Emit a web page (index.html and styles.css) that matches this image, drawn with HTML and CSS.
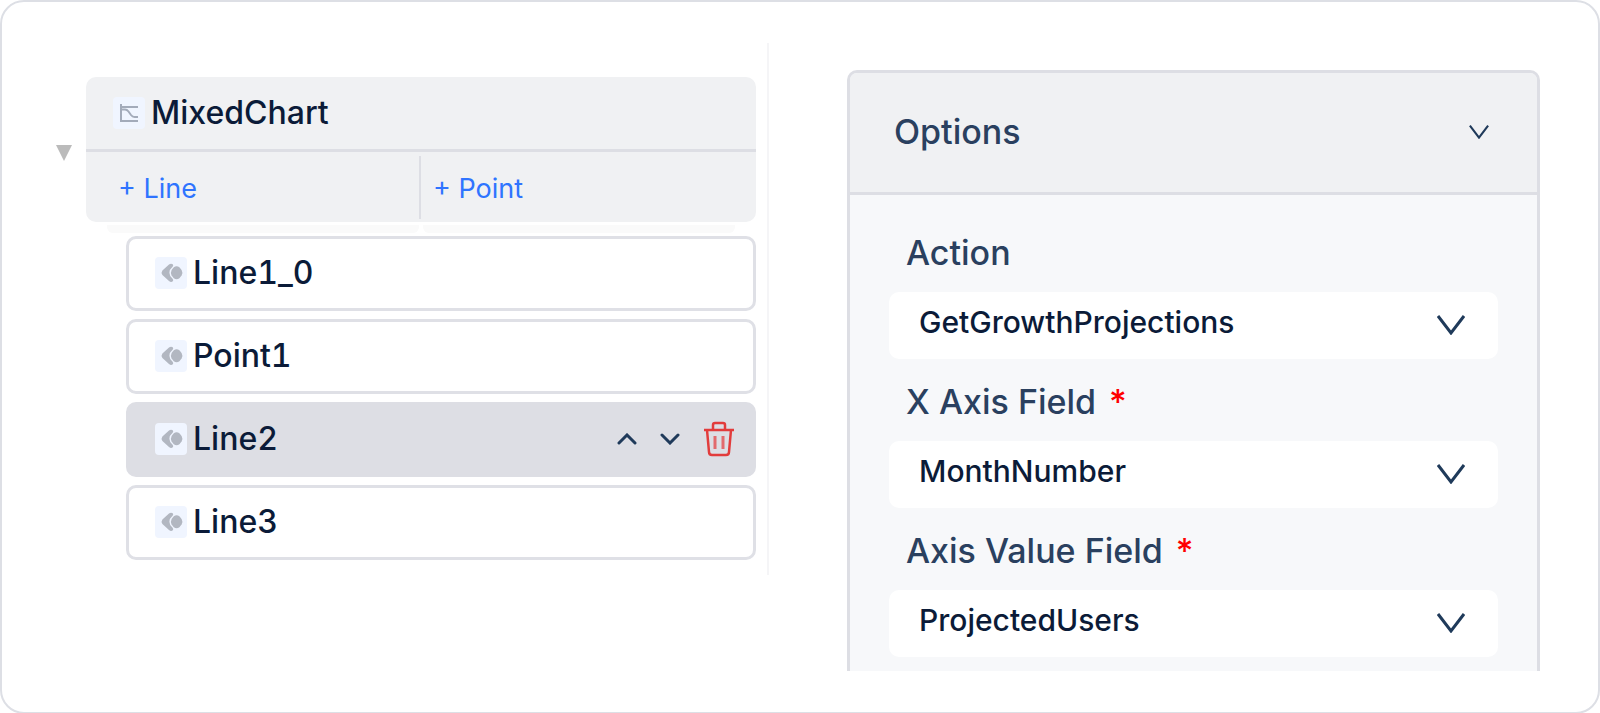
FILE: index.html
```
<!DOCTYPE html>
<html lang="en">
<head>
  <meta charset="UTF-8">
  <meta name="viewport" content="width=device-width, initial-scale=1.0">
  <title>Mixed Chart Options</title>
  <link rel="stylesheet" href="styles.css">
</head>
<body>
  <svg class="sprite" aria-hidden="true">
    <symbol id="icon-node" viewBox="0 0 32 32">
      <path d="M14 7.500 Q16.200 5.800 18 7.600 Q18.600 8.800 17.600 9.800 Q14.400 12.400 14.400 15.800 Q14.400 19.200 17.600 21.800 Q18.600 23 18 24 Q16.200 25.800 14 24 L7.400 18 Q5.800 15.800 7.400 13.600 Z"/>
      <path d="M18.800 10.300 Q21.600 8.300 24.400 10.300 L26.600 13 Q28.200 15.800 26.600 18.600 L24.400 21.200 Q21.600 23.200 18.800 21.200 L16.600 18.600 Q15.200 15.800 16.600 13 Z"/>
    </symbol>
    <symbol id="icon-arrow" viewBox="0 0 28 20">
      <path d="M1 1 L14 18 L27 1"/>
    </symbol>
  </svg>
  <main class="frame">
    <section class="tree">
      <button class="toggle" type="button" aria-label="Collapse"></button>
      <div class="tree-content">
        <div class="tree-header">
          <div class="tree-title">
            <svg class="icon-box" viewBox="0 0 32 32" aria-hidden="true">
              <path class="chart-line" d="M8 7 V24 H25 M8 10 H25 M8 12.500 H12 Q14 12.500 15.500 14.500 L18 18 Q19.500 20 21.500 20 H25"/>
            </svg>
            <span>MixedChart</span>
          </div>
          <div class="add-row">
            <button type="button">+ Line</button>
            <button type="button">+ Point</button>
          </div>
        </div>
        <div class="shade"><span></span><span></span></div>
        <ul class="items">
          <li class="item">
            <svg class="icon-box" aria-hidden="true"><use href="#icon-node"/></svg>
            <span>Line1_0</span>
          </li>
          <li class="item">
            <svg class="icon-box" aria-hidden="true"><use href="#icon-node"/></svg>
            <span>Point1</span>
          </li>
          <li class="item selected">
            <svg class="icon-box" aria-hidden="true"><use href="#icon-node"/></svg>
            <span>Line2</span>
            <div class="actions">
              <button type="button" aria-label="Move up">
                <svg class="move" viewBox="0 0 20 12"><path d="M2 10 L10 2 L18 10"/></svg>
              </button>
              <button type="button" aria-label="Move down">
                <svg class="move" viewBox="0 0 20 12"><path d="M2 2 L10 10 L18 2"/></svg>
              </button>
              <button type="button" aria-label="Delete">
                <svg class="trash" viewBox="0 0 32 36">
                  <path d="M1 9 H31 M10 9 V4 Q10 2 12 2 H20 Q22 2 22 4 V9 M4 9 L6 31 Q6 34 9 34 H23 Q26 34 26 31 L28 9"/>
                  <path class="bars" d="M12 15 V28 M20 15 V28"/>
                </svg>
              </button>
            </div>
          </li>
          <li class="item">
            <svg class="icon-box" aria-hidden="true"><use href="#icon-node"/></svg>
            <span>Line3</span>
          </li>
        </ul>
      </div>
    </section>
    <section class="options">
      <button class="options-header" type="button">
        <span>Options</span>
        <svg class="arrow small"><use href="#icon-arrow"/></svg>
      </button>
      <form class="options-body">
        <label for="action">Action</label>
        <div class="select-wrap">
          <select id="action"><option>GetGrowthProjections</option></select>
          <svg class="arrow"><use href="#icon-arrow"/></svg>
        </div>
        <label for="xAxis">X Axis Field <span class="required">*</span></label>
        <div class="select-wrap">
          <select id="xAxis"><option>MonthNumber</option></select>
          <svg class="arrow"><use href="#icon-arrow"/></svg>
        </div>
        <label for="axisValue">Axis Value Field <span class="required">*</span></label>
        <div class="select-wrap">
          <select id="axisValue"><option>ProjectedUsers</option></select>
          <svg class="arrow"><use href="#icon-arrow"/></svg>
        </div>
      </form>
    </section>
  </main>
</body>
</html>
```

FILE: styles.css
```
* {
  box-sizing: border-box;
}
body {
  margin: 0;
  background: #ffffff;
  font-family: Inter, sans-serif;
  font-optical-sizing: none;
  color: #0b1b38;
}
button, select {
  font: inherit;
  color: inherit;
  border: none;
  background: none;
  padding: 0;
  cursor: pointer;
}
.sprite {
  position: absolute;
  width: 0;
  height: 0;
}
.frame {
  display: grid;
  grid-template-columns: 725fr 693fr;
  gap: 78px;
  align-items: start;
  min-height: 100vh;
  padding: 41px 58px 41px 42px;
  border: 2px solid #dddfe5;
  border-radius: 24px;
}

/* component tree */
.tree {
  display: flex;
  align-items: flex-start;
  gap: 14px;
  padding: 34px 11px 15px 12px;
  border-right: 2px solid #f5f5f7;
}
.toggle {
  margin-top: 68px;
  border-left: 8px solid transparent;
  border-right: 8px solid transparent;
  border-top: 16px solid #bbbbbb;
}
.tree-content {
  flex: 1;
}
.tree-header {
  background: #f0f1f3;
  border-radius: 10px;
  overflow: hidden;
}
.tree-title, .item {
  display: flex;
  align-items: center;
  gap: 6px;
  font-size: 32px;
  font-weight: 500;
  font-variant-numeric: tabular-nums;
  line-height: 40px;
}
.tree-title {
  height: 72px;
  padding-left: 27px;
}
.icon-box {
  width: 32px;
  height: 32px;
  border-radius: 4px;
  background: #f0f5ff;
  fill: #b2b7c1;
}
.chart-line {
  fill: none;
  stroke: #a3abba;
  stroke-width: 2;
}
.add-row {
  display: flex;
  height: 73px;
  padding: 4px 0 3px;
  border-top: 3px solid #dddee4;
}
.add-row button {
  width: 50%;
  padding: 2px 12px 0;
  font-size: 27px;
  line-height: 32px;
  text-align: left;
  color: #2f74ff;
}
.add-row button:first-child {
  padding-left: 32px;
  border-right: 2px solid #dddee4;
}
.shade {
  display: flex;
  gap: 4px;
  height: 14px;
  padding: 3px 21px;
}
.shade span {
  flex: 1;
  background: #fafafa;
  border-radius: 0 0 6px 6px;
}
.items {
  display: flex;
  flex-direction: column;
  gap: 8px;
  margin: 0 0 0 40px;
  padding: 0;
  list-style: none;
}
.item {
  height: 75px;
  padding: 0 18px 2px 26px;
  border: 3px solid #dfe0e6;
  border-radius: 10px;
}
.selected {
  background: #dddee4;
  border-color: #dddee4;
}
.actions {
  display: flex;
  align-items: center;
  gap: 23px;
  margin-left: auto;
}
.actions button {
  display: flex;
}
.move {
  width: 20px;
  height: 12px;
  fill: none;
  stroke: #1f3a5a;
  stroke-width: 3;
  stroke-linecap: round;
}
.trash {
  width: 32px;
  height: 36px;
  fill: none;
  stroke: #e23c3c;
  stroke-width: 2.5;
}
.bars {
  stroke: #e26a6d;
  stroke-width: 3;
}

/* options panel */
.options {
  margin-top: 27px;
  border: 3px solid #dddee4;
  border-bottom: none;
  border-radius: 10px 10px 0 0;
  background: #f7f8fa;
  color: #2a405f;
  overflow: hidden;
}
.options-header {
  display: flex;
  align-items: center;
  justify-content: space-between;
  width: 100%;
  height: 122px;
  padding: 0 48px 2px 44px;
  border-bottom: 3px solid #dddee4;
  background: #f0f1f3;
  font-size: 34px;
  font-weight: 500;
}
.options-body {
  display: flex;
  flex-direction: column;
  padding: 38px 39px 14px;
}
.options-body label {
  padding-left: 17px;
  margin-bottom: 19px;
  font-size: 34px;
  font-weight: 500;
  line-height: 40px;
}
.required {
  margin-left: 4px;
  color: #ff0000;
}
.select-wrap {
  position: relative;
  margin-bottom: 23px;
}
.select-wrap:last-child {
  margin-bottom: 0;
}
.select-wrap select {
  display: block;
  width: 100%;
  height: 67px;
  padding: 0 80px 8px 30px;
  border-radius: 10px;
  background: #ffffff;
  color: #0b1b38;
  font-size: 30px;
  font-weight: 500;
  appearance: none;
}
.arrow {
  width: 28px;
  height: 20px;
  fill: none;
  stroke: #1f3a5a;
  stroke-width: 3;
}
.arrow.small {
  width: 20px;
  height: 14px;
}
.select-wrap .arrow {
  position: absolute;
  top: 23px;
  right: 33px;
  pointer-events: none;
}
```
